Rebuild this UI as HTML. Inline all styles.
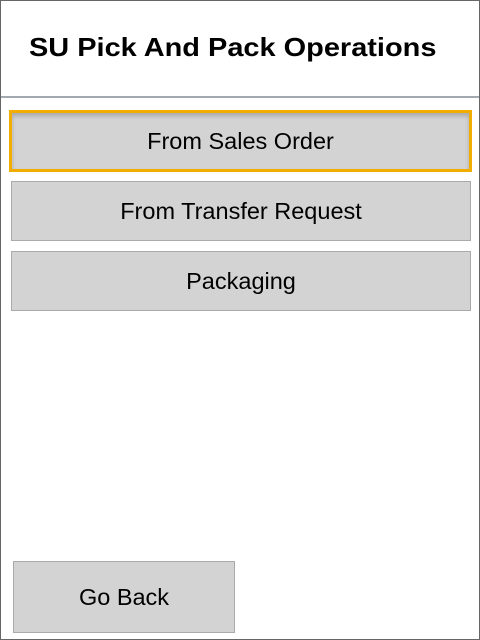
<!DOCTYPE html>
<html><head><style>
html,body{margin:0;padding:0;}
body{width:480px;height:640px;position:relative;background:#fff;font-family:"Liberation Sans",sans-serif;overflow:hidden;}
.frame{position:absolute;left:0;top:0;width:478px;height:638px;border:1px solid #666;}
.title{position:absolute;left:29px;top:32px;font-size:26px;font-weight:bold;color:#000;white-space:nowrap;transform:scaleX(1.113);transform-origin:left;}
.line{position:absolute;left:1px;top:96px;width:478px;height:2px;background:#a3a9b0;}
.btn{position:absolute;background:#d3d3d3;border:1px solid #aaa;box-sizing:border-box;display:flex;align-items:center;justify-content:center;font-size:23.5px;color:#000;}
.sel{border:3px solid #f2ae00;box-shadow:inset 0 3px 4px rgba(0,0,0,0.2);}
</style></head><body>
<div class="frame"></div>
<div class="title">SU Pick And Pack Operations</div>
<div class="line"></div>
<div class="btn sel" style="left:9px;top:110px;width:463px;height:62px;">From Sales Order</div>
<div class="btn" style="left:11px;top:181px;width:460px;height:60px;">From Transfer Request</div>
<div class="btn" style="left:11px;top:251px;width:460px;height:60px;">Packaging</div>
<div class="btn" style="left:13px;top:561px;width:222px;height:72px;">Go Back</div>
</body></html>
